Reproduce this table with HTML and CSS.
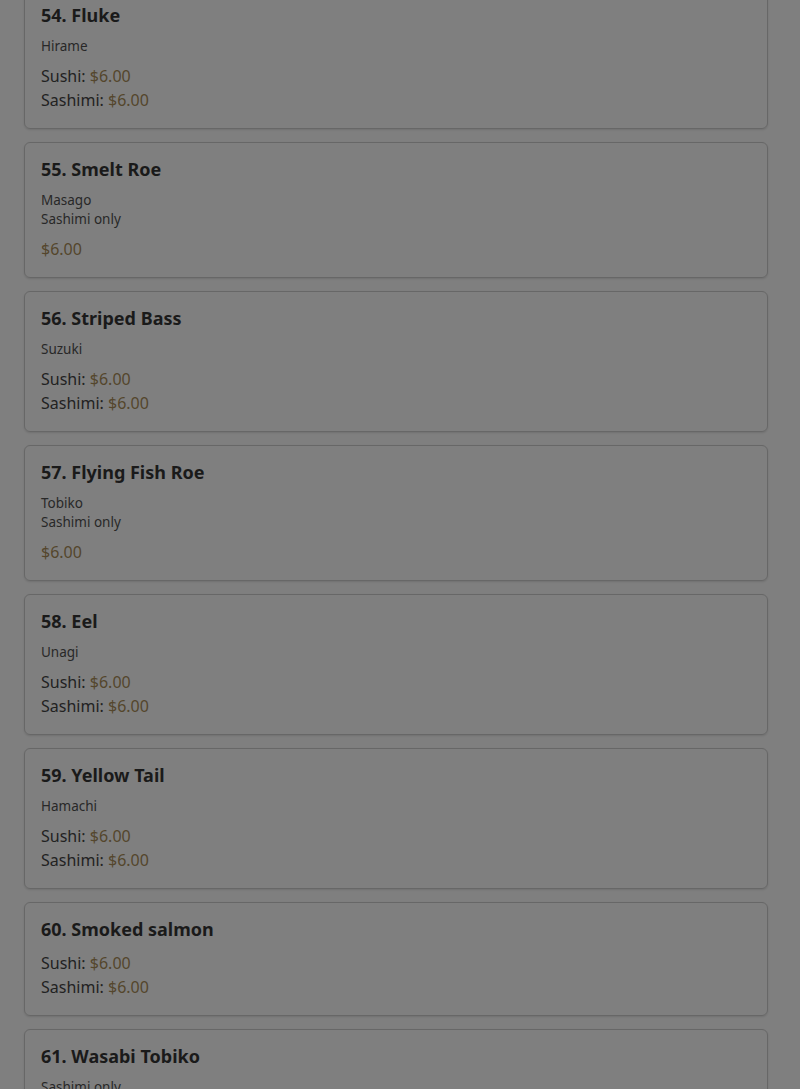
FILE: index.html
```html
<!DOCTYPE html>
<html>
<head>
<meta charset="utf-8">
<link rel="stylesheet" href="styles.css">
</head>
<body>
<div class="list">
  <div class="card first">
    <h3 class="title">54. Fluke</h3>
    <div class="desc">Hirame</div>
    <div class="prices"><div>Sushi: <span class="price">$6.00</span></div><div>Sashimi: <span class="price">$6.00</span></div></div>
  </div>
  <div class="card">
    <h3 class="title">55. Smelt Roe</h3>
    <div class="desc">Masago<br>Sashimi only</div>
    <div class="prices"><div><span class="price">$6.00</span></div></div>
  </div>
  <div class="card">
    <h3 class="title">56. Striped Bass</h3>
    <div class="desc">Suzuki</div>
    <div class="prices"><div>Sushi: <span class="price">$6.00</span></div><div>Sashimi: <span class="price">$6.00</span></div></div>
  </div>
  <div class="card">
    <h3 class="title">57. Flying Fish Roe</h3>
    <div class="desc">Tobiko<br>Sashimi only</div>
    <div class="prices"><div><span class="price">$6.00</span></div></div>
  </div>
  <div class="card">
    <h3 class="title">58. Eel</h3>
    <div class="desc">Unagi</div>
    <div class="prices"><div>Sushi: <span class="price">$6.00</span></div><div>Sashimi: <span class="price">$6.00</span></div></div>
  </div>
  <div class="card">
    <h3 class="title">59. Yellow Tail</h3>
    <div class="desc">Hamachi</div>
    <div class="prices"><div>Sushi: <span class="price">$6.00</span></div><div>Sashimi: <span class="price">$6.00</span></div></div>
  </div>
  <div class="card">
    <h3 class="title">60. Smoked salmon</h3>
    <div class="prices"><div>Sushi: <span class="price">$6.00</span></div><div>Sashimi: <span class="price">$6.00</span></div></div>
  </div>
  <div class="card">
    <h3 class="title">61. Wasabi Tobiko</h3>
    <div class="desc">Sashimi only</div>
    <div class="prices"><div><span class="price">$6.00</span></div></div>
  </div>
</div>
</body>
</html>
```
FILE: styles.css
```css
html, body {
  margin: 0;
  padding: 0;
  background: #7f7f7f;
  height: 1089px;
  overflow: hidden;
}
body {
  font-family: "Noto Sans", "Open Sans", sans-serif;
  color: #1c1c1c;
}
.list {
  display: flex;
  flex-direction: column;
  gap: 13px;
  padding: 0 32px 0 24px;
  margin-top: -12px;
}
.card {
  border: 1px solid #676767;
  border-radius: 6px;
  padding: 16px;
  box-shadow: 0 1px 2px rgba(0,0,0,0.12);
}
.title {
  margin: 0 0 12px;
  font-size: 18px;
  line-height: 20px;
  font-weight: 700;
  color: #1a1a1a;
}
.desc {
  font-size: 13.5px;
  line-height: 19px;
  margin-bottom: 8px;
  color: #282828;
}
.prices {
  font-size: 16px;
  line-height: 24px;
  color: #222;
}
.price {
  color: #54462c;
}
```
